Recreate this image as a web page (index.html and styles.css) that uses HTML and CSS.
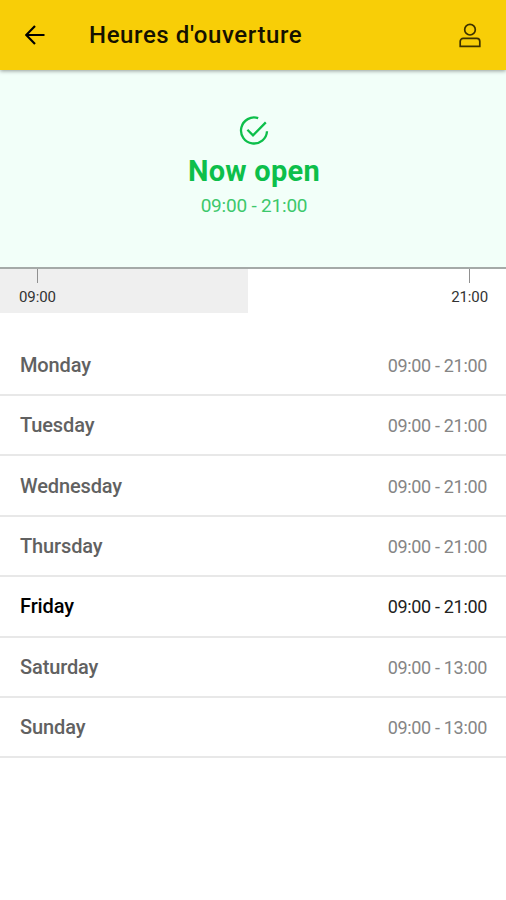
FILE: index.html
```html
<!DOCTYPE html>
<html lang="fr">
<head>
  <meta charset="UTF-8" />
  <meta name="viewport" content="width=device-width, initial-scale=1.0" />
  <title>Heures d'ouverture</title>
  <link rel="stylesheet" href="styles.css">
</head>
<body>
  <header class="topbar">
    <svg class="icon-back" viewBox="0 0 20 20">
      <path d="M19.5 10H1.5M10 1L1.2 10L10 19" />
    </svg>
    <h1 class="title">Heures d'ouverture</h1>
    <svg class="icon-user" viewBox="0 0 22 25">
      <circle cx="11" cy="6.7" r="5.3" />
      <path d="M1.2 23.3V18.4a3 3 0 0 1 3-3h13.6a3 3 0 0 1 3 3v4.9z" />
    </svg>
  </header>

  <section class="status">
    <svg class="icon-check" viewBox="0 0 30 30">
      <path d="M19.2 2.2A13 13 0 1 0 28 15.2" />
      <path d="M8.4 13.8L14 19.4L26.8 6.4" />
    </svg>
    <div class="status-text">Now open</div>
    <div class="status-hours">09:00 - 21:00</div>
  </section>

  <div class="timeline">
    <div class="elapsed"></div>
    <div class="mark">09:00</div>
    <div class="mark">21:00</div>
  </div>

  <ul class="days">
    <li class="day"><span class="name">Monday</span><span class="hours">09:00 - 21:00</span></li>
    <li class="day"><span class="name">Tuesday</span><span class="hours">09:00 - 21:00</span></li>
    <li class="day"><span class="name">Wednesday</span><span class="hours">09:00 - 21:00</span></li>
    <li class="day"><span class="name">Thursday</span><span class="hours">09:00 - 21:00</span></li>
    <li class="day today"><span class="name">Friday</span><span class="hours">09:00 - 21:00</span></li>
    <li class="day"><span class="name">Saturday</span><span class="hours">09:00 - 13:00</span></li>
    <li class="day"><span class="name">Sunday</span><span class="hours">09:00 - 13:00</span></li>
  </ul>
</body>
</html>
```
FILE: styles.css
```css
* { box-sizing: border-box; margin: 0; padding: 0; }
body {
  background: #fff;
  color: #000;
  font-family: Roboto, sans-serif;
}
svg {
  display: block;
  fill: none;
  stroke: currentColor;
}
.topbar {
  position: relative;
  z-index: 1;
  display: flex;
  align-items: center;
  height: 70px;
  padding: 0 25px;
  background: #f8ce07;
  box-shadow: 0 1px 4px rgba(0, 0, 0, 0.4);
}
.icon-back {
  width: 20px;
  height: 20px;
  stroke-width: 2.2;
}
.title {
  flex: 1;
  margin-left: 44px;
  font-size: 24px;
  font-weight: 500;
  letter-spacing: 0.6px;
  color: #151100;
}
.icon-user {
  width: 22px;
  height: 25px;
  stroke-width: 1.7;
  color: #3d3200;
}
.status {
  display: flex;
  flex-direction: column;
  align-items: center;
  height: 197px;
  padding-top: 46px;
  padding-left: 2px;
  background: #f2fff9;
  color: #0dbf4b;
}
.icon-check {
  width: 30px;
  height: 30px;
  stroke-width: 2.3;
}
.status-text {
  margin-top: 7px;
  font-size: 29px;
  font-weight: 700;
  line-height: 36px;
  letter-spacing: 0.25px;
}
.status-hours {
  margin-top: 5px;
  font-size: 19px;
  line-height: 24px;
  letter-spacing: -0.2px;
  color: #3dc86c;
}

/* timeline under the status block */
.timeline {
  position: relative;
  display: flex;
  justify-content: space-between;
  height: 46px;
  padding: 0 18px 0 19px;
  border-top: 2px solid #a5aaa8;
}
.elapsed {
  position: absolute;
  top: 0;
  left: 0;
  width: 49%;
  height: 100%;
  background: #efefef;
}
.mark {
  position: relative;
  font-size: 15px;
  line-height: 18px;
  letter-spacing: -0.1px;
  color: #333;
}
.mark::before {
  content: "";
  display: block;
  width: 1px;
  height: 14px;
  margin: 0 auto 5px;
  background: #909090;
}

.days {
  margin-top: 22.6px;
  list-style: none;
}
.day {
  display: flex;
  justify-content: space-between;
  align-items: center;
  height: 60.4px;
  padding: 0 19px 0 20px;
  border-bottom: 2px solid #e8e8e8;
}
.name {
  font-size: 20px;
  font-weight: 500;
  letter-spacing: -0.12px;
  color: #616161;
}
.hours {
  padding-top: 1px;
  font-size: 18px;
  letter-spacing: -0.33px;
  color: #858585;
}
.today .name {
  color: #000;
}
.today .hours {
  color: #222;
}
```
